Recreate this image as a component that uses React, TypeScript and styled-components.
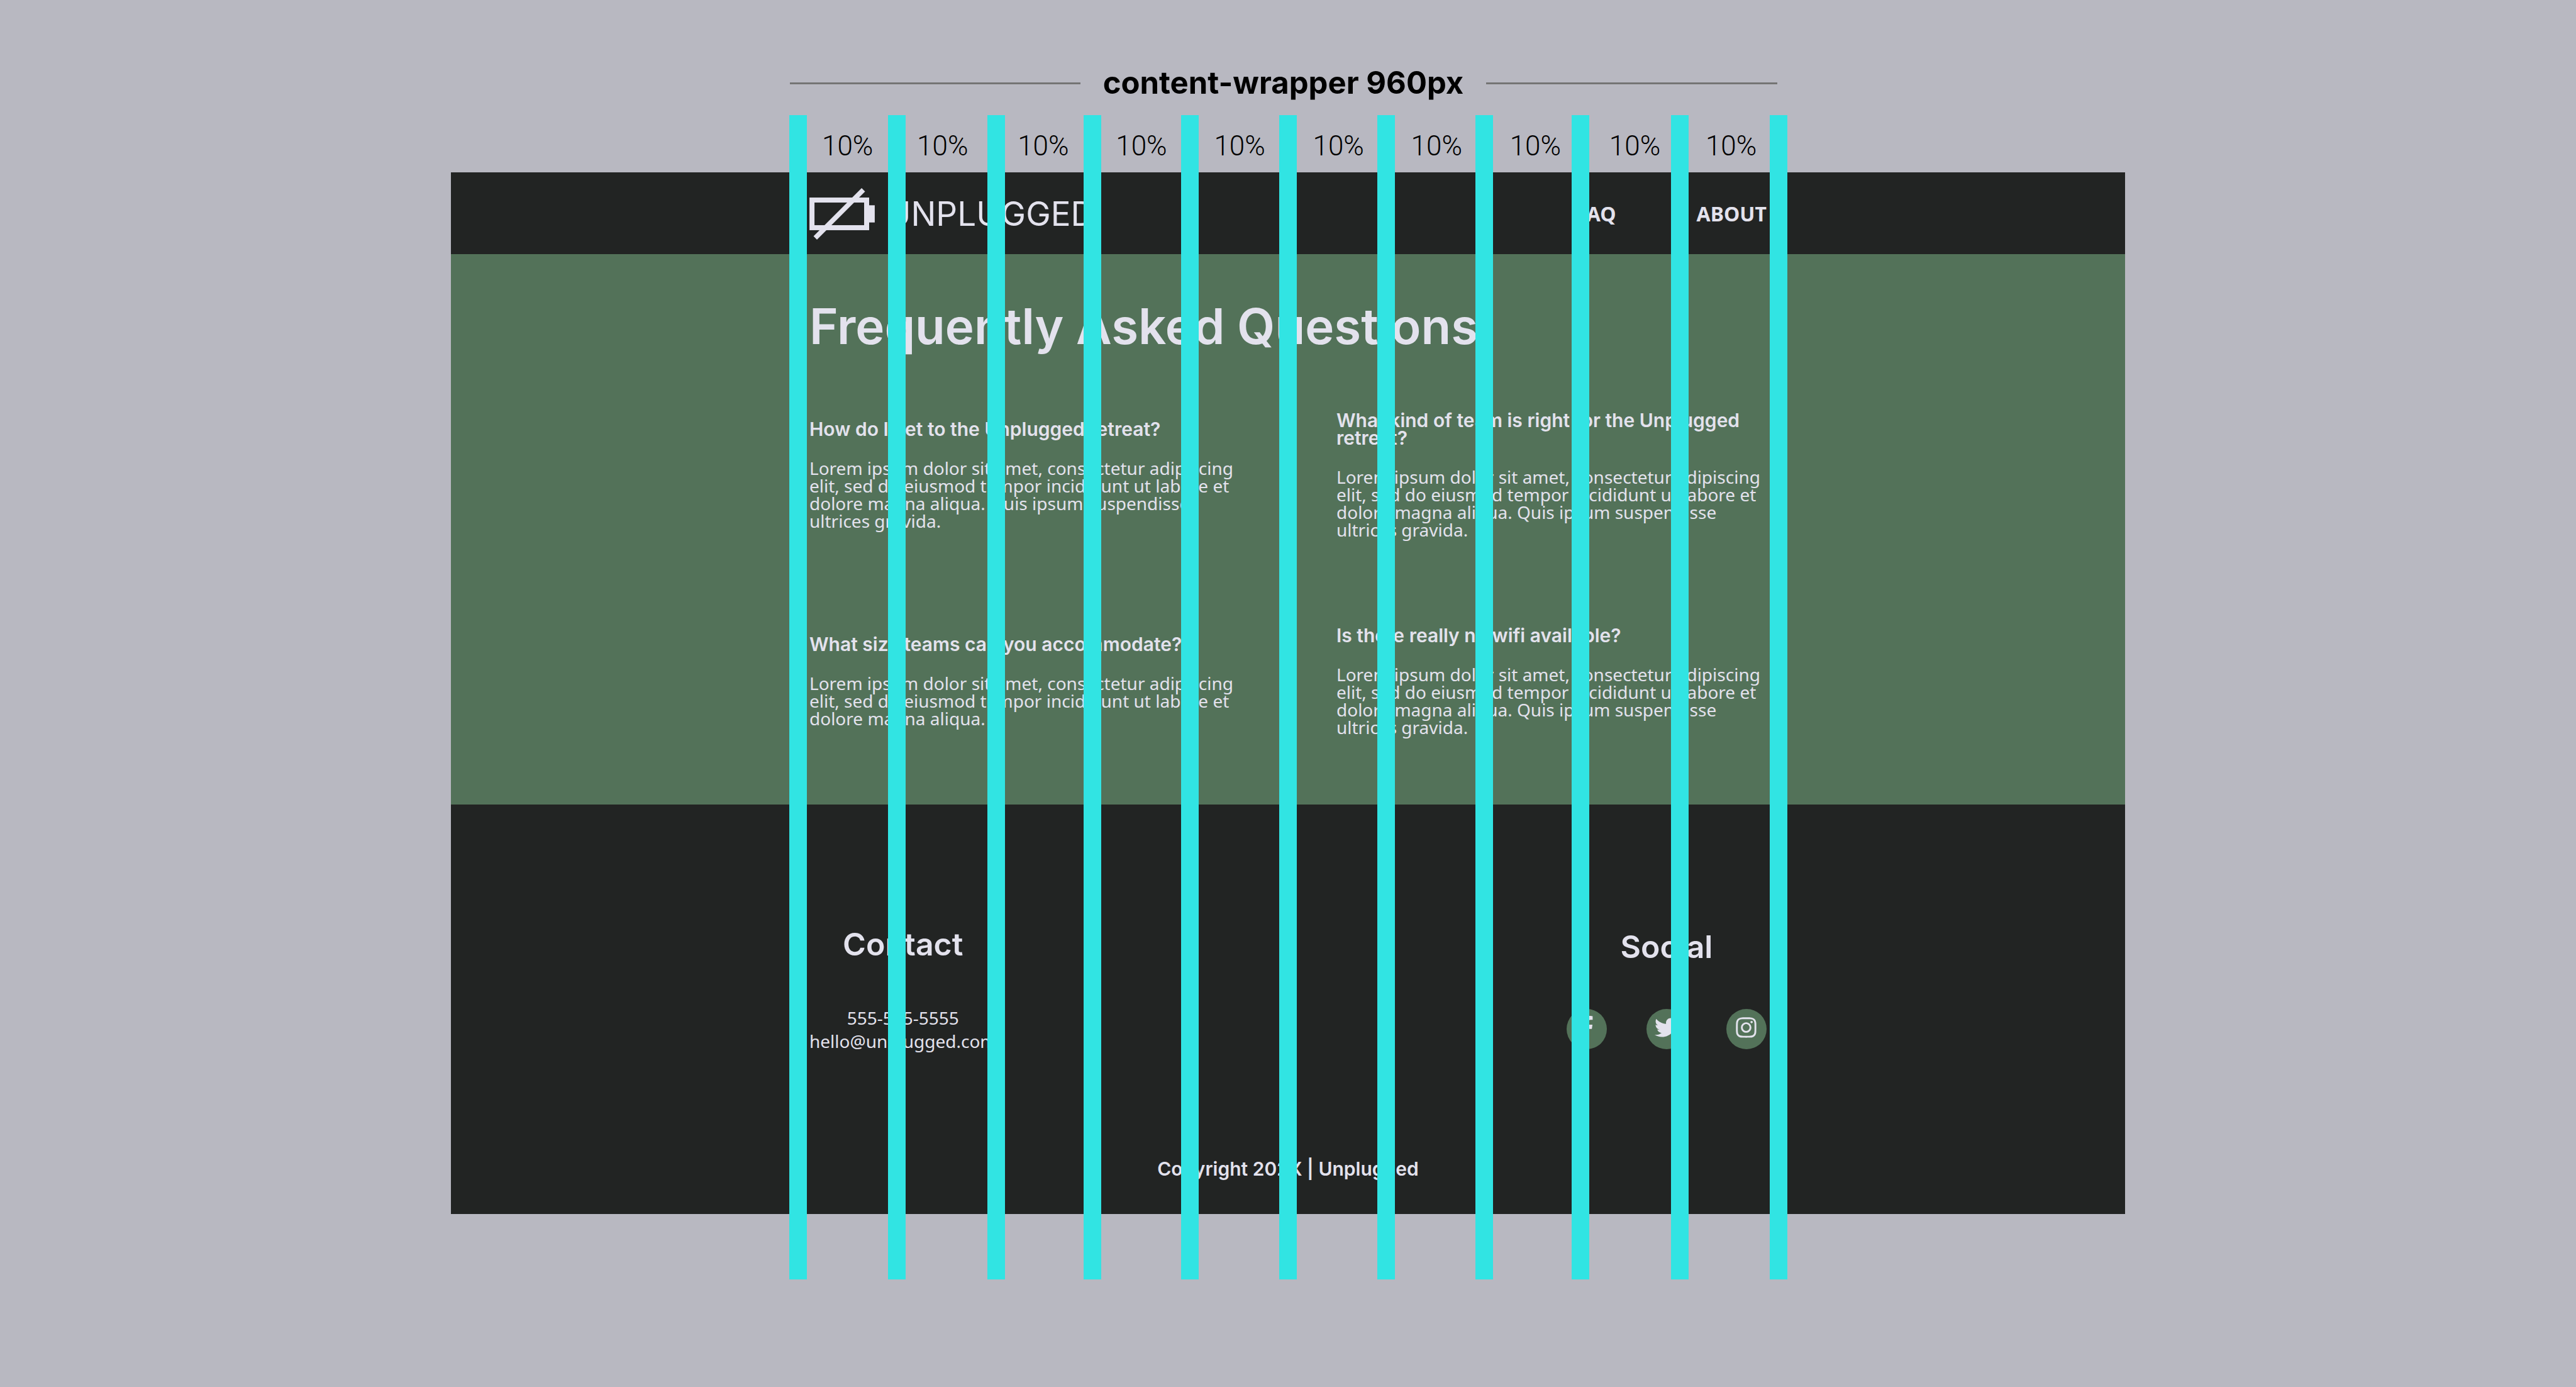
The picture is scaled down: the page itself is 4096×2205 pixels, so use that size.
import React from "react";
import styled, { createGlobalStyle } from "styled-components";
import { FaFacebookF, FaInstagram, FaTwitter } from "react-icons/fa";

const color = {
  page: "#b8b8c1",
  dark: "#222423",
  green: "#537259",
  light: "#e3e2ed",
  guide: "#31e4e3",
  rule: "#747474",
};

const display = `Inter, "Open Sans", sans-serif`;
const body = `"Noto Sans", "Open Sans", sans-serif`;
const figures = `Roboto, Inter, sans-serif`;

const GlobalStyle = createGlobalStyle`
  *, *::before, *::after { box-sizing: border-box; }
  body {
    margin: 0;
    background: ${color.page};
    font-family: ${body};
  }
  h1, h2, h3, p { margin: 0; }
  a { color: inherit; text-decoration: none; }
`;

const Page = styled.div`
  display: flex;
  flex-direction: column;
  align-items: center;
  min-height: 100vh;
  padding-top: 100px;
`;

const Caption = styled.header`
  display: flex;
  align-items: center;
  gap: 36px;
  width: 100%;
  max-width: 1585px;
  height: 64px;
  padding-right: 15px;
`;

const CaptionRule = styled.span`
  flex: 1;
  height: 3px;
  background: ${color.rule};
`;

const CaptionText = styled.p`
  font: 700 49px/64px ${display};
  color: #000;
`;

const Stage = styled.div`
  position: relative;
  display: flex;
  flex-direction: column;
  align-items: center;
  width: 100%;
  margin-top: 19px;
  padding-bottom: 104px;
`;

const Labels = styled.div`
  display: grid;
  grid-template-columns: 151fr 160fr 156fr 156fr 157fr 156fr 157fr 158fr 153fr 130fr;
  align-items: center;
  width: 100%;
  max-width: 1588px;
  height: 91px;
  padding-left: 53px;
  padding-top: 6px;
`;

const Label = styled.span`
  font: 300 44px/52px ${figures};
  color: #000;
`;

const Guides = styled.div`
  position: absolute;
  inset: 0;
  display: grid;
  grid-template-columns: 157fr 158fr 153fr 155fr 156fr 156fr 156fr 153fr 158fr 157fr 28px;
  width: 100%;
  max-width: 1587px;
  margin: 0 auto;
  pointer-events: none;
`;

const Guide = styled.span`
  width: 28px;
  background: ${color.guide};
`;

const Mockup = styled.div`
  width: 65%;
  color: ${color.light};
`;

const Band = styled.div<{ $tone: "dark" | "green" }>`
  display: flex;
  justify-content: center;
  background: ${(p) => color[p.$tone]};
`;

const Wrapper = styled.div`
  width: 100%;
  max-width: 1522px;
`;

const TopBar = styled(Wrapper)`
  display: flex;
  align-items: center;
  justify-content: space-between;
  height: 130px;
  padding-top: 2px;
`;

const Brand = styled.a`
  display: flex;
  align-items: center;
  gap: 18px;
  font: 400 53px/64px ${display};
`;

const BrandMark = styled.svg`
  width: 104px;
  height: 82px;
`;

const Nav = styled.nav`
  display: flex;
  gap: 128px;
  font: 700 32px/44px ${body};
`;

const Faq = styled(Wrapper)`
  padding: 67px 0 109px;
`;

const Title = styled.h1`
  font: 600 78px/96px ${display};
`;

const Questions = styled.div`
  display: grid;
  grid-template-columns: repeat(2, minmax(0, 684px));
  justify-content: space-between;
  align-items: center;
  row-gap: 140px;
  margin-top: 87px;
`;

const Question = styled.article`
  display: flex;
  flex-direction: column;
  gap: 34px;
`;

const QuestionTitle = styled.h3`
  font: 600 30px/28px ${display};
`;

const Answer = styled.p`
  font: 400 28px/28px ${body};
`;

const FooterInner = styled(Wrapper)`
  display: flex;
  flex-direction: column;
  align-items: center;
  padding: 190px 0 52px;
`;

const FooterColumns = styled.div`
  display: flex;
  justify-content: space-between;
  width: 100%;
`;

const FooterColumn = styled.section<{ $drop?: number }>`
  display: flex;
  flex-direction: column;
  align-items: center;
  padding-top: ${(p) => p.$drop ?? 0}px;
`;

const FooterTitle = styled.h2`
  font: 600 50px/64px ${display};
`;

const ContactLines = styled.address`
  display: flex;
  flex-direction: column;
  align-items: center;
  margin-top: 67px;
  font: 400 28px/37px ${body};
`;

const SocialLinks = styled.div`
  display: flex;
  gap: 63px;
  margin-top: 67px;
`;

const SocialLink = styled.a`
  display: flex;
  align-items: center;
  justify-content: center;
  width: 64px;
  height: 64px;
  padding-bottom: 6px;
  border-radius: 50%;
  background: ${color.green};
  font-size: 37px;
`;

const Copyright = styled.p`
  margin-top: 164px;
  font: 600 30px/40px ${display};
`;

const lorem =
  "Lorem ipsum dolor sit amet, consectetur adipiscing elit, sed do eiusmod tempor incididunt ut labore et dolore magna aliqua.";
const loremLong = `${lorem} Quis ipsum suspendisse ultrices gravida.`;

const questions = [
  { title: "How do I get to the Unplugged retreat?", answer: loremLong },
  { title: "What kind of team is right for the Unplugged retreat?", answer: loremLong },
  { title: "What size teams can you accommodate?", answer: lorem },
  { title: "Is there really no wifi available?", answer: loremLong },
];

const socials = [
  { name: "Facebook", Icon: FaFacebookF },
  { name: "Twitter", Icon: FaTwitter },
  { name: "Instagram", Icon: FaInstagram },
];

const columns = Array.from({ length: 10 }, (_, i) => i);
const guides = Array.from({ length: 11 }, (_, i) => i);

function BatteryOff() {
  return (
    <BrandMark viewBox="38 38 338 267" aria-hidden="true">
      <rect x="51" y="100" width="283" height="143" fill="none" stroke="currentColor" strokeWidth="26" />
      <rect x="346" y="127" width="30" height="89" fill="currentColor" />
      <path d="M68 296 317 47" stroke="currentColor" strokeWidth="25" />
    </BrandMark>
  );
}

export default function App() {
  return (
    <Page>
      <GlobalStyle />
      <Caption>
        <CaptionRule />
        <CaptionText>content-wrapper 960px</CaptionText>
        <CaptionRule />
      </Caption>
      <Stage>
        <Labels>
          {columns.map((n) => (
            <Label key={n}>10%</Label>
          ))}
        </Labels>
        <Mockup>
          <Band as="header" $tone="dark">
            <TopBar>
              <Brand href="#home">
                <BatteryOff />
                UNPLUGGED
              </Brand>
              <Nav>
                <a href="#faq">FAQ</a>
                <a href="#about">ABOUT</a>
              </Nav>
            </TopBar>
          </Band>
          <Band as="main" $tone="green">
            <Faq>
              <Title>Frequently Asked Questions</Title>
              <Questions>
                {questions.map((q) => (
                  <Question key={q.title}>
                    <QuestionTitle>{q.title}</QuestionTitle>
                    <Answer>{q.answer}</Answer>
                  </Question>
                ))}
              </Questions>
            </Faq>
          </Band>
          <Band as="footer" $tone="dark">
            <FooterInner>
              <FooterColumns>
                <FooterColumn>
                  <FooterTitle>Contact</FooterTitle>
                  <ContactLines>
                    <a href="tel:5555555555">555-555-5555</a>
                    <a href="mailto:hello@unplugged.com">hello@unplugged.com</a>
                  </ContactLines>
                </FooterColumn>
                <FooterColumn $drop={4}>
                  <FooterTitle>Social</FooterTitle>
                  <SocialLinks>
                    {socials.map(({ name, Icon }) => (
                      <SocialLink key={name} href={`#${name.toLowerCase()}`} aria-label={name}>
                        <Icon />
                      </SocialLink>
                    ))}
                  </SocialLinks>
                </FooterColumn>
              </FooterColumns>
              <Copyright>Copyright 202X | Unplugged</Copyright>
            </FooterInner>
          </Band>
        </Mockup>
        <Guides aria-hidden="true">
          {guides.map((n) => (
            <Guide key={n} />
          ))}
        </Guides>
      </Stage>
    </Page>
  );
}
